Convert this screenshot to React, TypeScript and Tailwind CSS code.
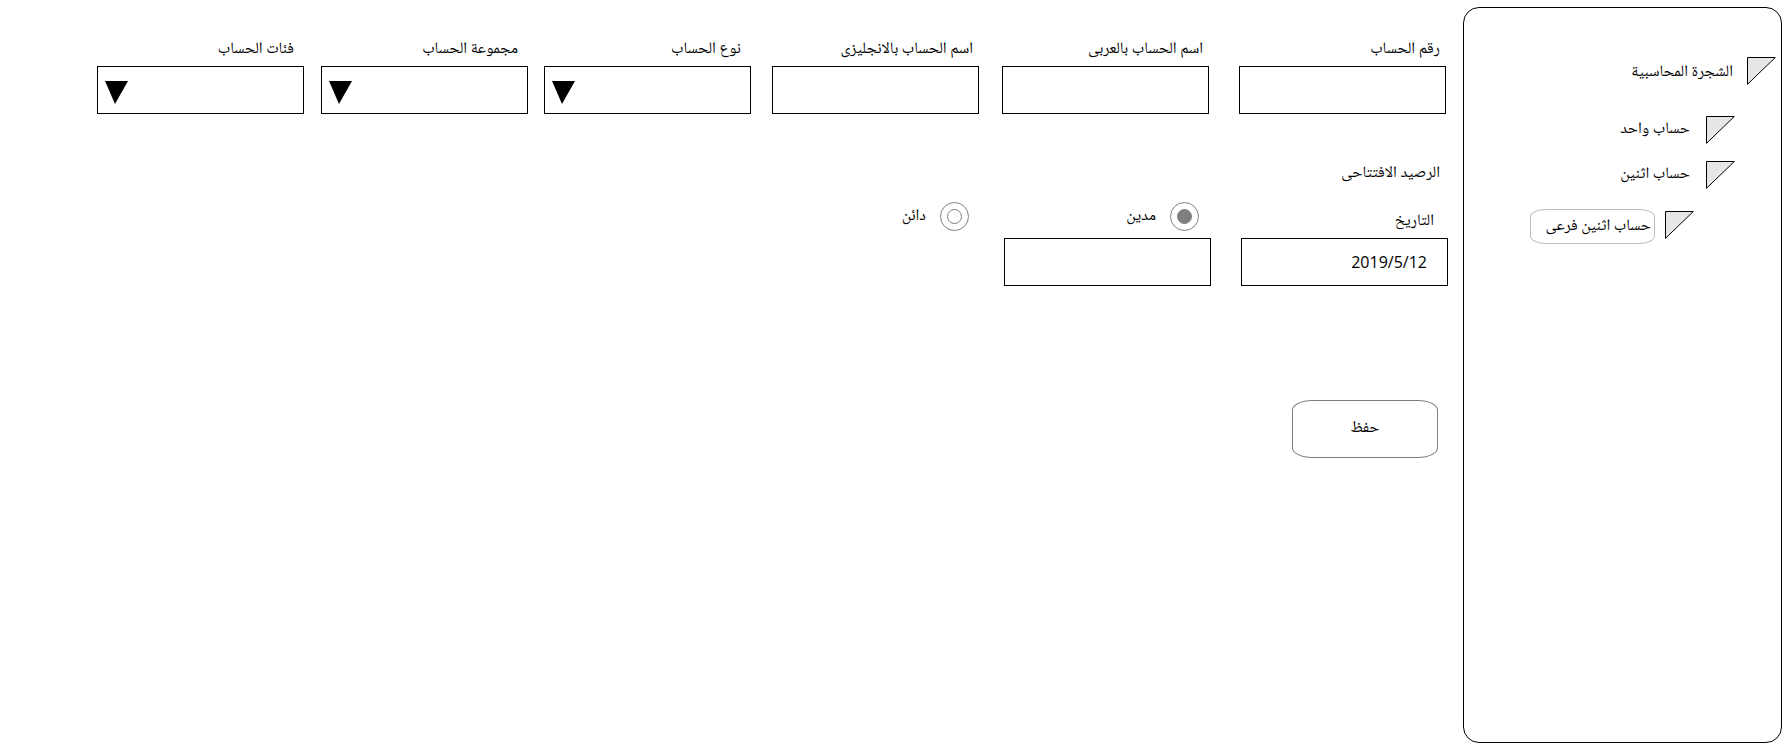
import { useState } from 'react';

const boxClass =
  'h-12 w-full border border-black bg-white px-5 font-[Open_Sans,Noto_Sans,sans-serif] text-base text-black outline-none focus:ring-1 focus:ring-gray-400';

const columns =
  'grid grid-cols-[207fr_30fr_207fr_23fr_207fr_21fr_207fr_16fr_207fr_17fr_207fr]';

function TextField({ id, label, place }: { id: string; label: string; place: string }) {
  return (
    <div className={`${place} flex min-w-0 flex-col gap-1`}>
      <label htmlFor={id} className="ps-1.5 leading-6">
        {label}
      </label>
      <input id={id} type="text" className={boxClass} />
    </div>
  );
}

function SelectField({ id, label, place }: { id: string; label: string; place: string }) {
  return (
    <div className={`${place} flex min-w-0 flex-col gap-1`}>
      <label htmlFor={id} className="ps-2.5 leading-6">
        {label}
      </label>
      <div className="relative">
        <select id={id} className={`${boxClass} appearance-none rounded-none`} defaultValue="">
          <option value="" />
        </select>
        <svg
          viewBox="0 0 23 23"
          className="pointer-events-none absolute left-2 top-[15px] size-[23px]"
          aria-hidden="true"
        >
          <path d="M0 0H23L10 23Z" fill="black" />
        </svg>
      </div>
    </div>
  );
}

function Corner() {
  return (
    <svg viewBox="0 0 29 28" className="h-7 w-[29px] shrink-0" aria-hidden="true">
      <path d="M0.5 0.5H28.3L0.5 27.3Z" fill="#e6e6e6" stroke="black" strokeLinejoin="round" />
    </svg>
  );
}

function SideRadio({
  id,
  label,
  checked,
  onSelect,
}: {
  id: string;
  label: string;
  checked: boolean;
  onSelect: () => void;
}) {
  return (
    <div className="flex items-center gap-3.5">
      <input
        id={id}
        type="radio"
        name="side"
        checked={checked}
        onChange={onSelect}
        className="grid size-[29px] shrink-0 appearance-none place-content-center rounded-full border border-[#7f7f7f] before:size-[15px] before:rounded-full before:border before:border-[#7f7f7f] before:content-[''] checked:before:bg-[#7f7f7f]"
      />
      <label htmlFor={id} className="leading-6">
        {label}
      </label>
    </div>
  );
}

export default function App() {
  const [side, setSide] = useState('debit');

  return (
    <div
      dir="rtl"
      className="flex min-h-screen gap-[15px] bg-white pb-2 ps-[10px] pt-[7px] font-[Noto_Naskh_Arabic,Noto_Sans,serif] text-base text-black"
    >
      <nav className="w-[319px] shrink-0 rounded-2xl border border-black ps-[5px] pt-[49px]">
        <ul>
          <li>
            <button type="button" className="flex items-center gap-3.5 leading-6">
              <Corner />
              <span className="pt-1">الشجرة المحاسبية</span>
            </button>
            <ul className="mt-[31px] ps-[41px]">
              <li>
                <button type="button" className="flex items-center gap-4 leading-6">
                  <Corner />
                  حساب واحد
                </button>
              </li>
              <li className="mt-[17px]">
                <button type="button" className="flex items-center gap-4 leading-6">
                  <Corner />
                  حساب اثنين
                </button>
                <ul className="mt-[22px] ps-[41px]">
                  <li>
                    <button type="button" className="flex items-start gap-2.5 leading-6">
                      <Corner />
                      <span className="-mt-0.5 flex h-[35px] w-[125px] items-center rounded-[16px_/_8px] border border-[#bfbfbf] ps-[3px]">
                        حساب اثنين فرعى
                      </span>
                    </button>
                  </li>
                </ul>
              </li>
            </ul>
          </li>
        </ul>
      </nav>

      <main className="min-w-0 flex-1 pt-[31px]">
        <form onSubmit={(e) => e.preventDefault()}>
          <div className={`${columns} pe-[97px] ps-0.5`}>
            <TextField id="number" label="رقم الحساب" place="col-start-1" />
            <TextField id="name-ar" label="اسم الحساب بالعربى" place="col-start-3" />
            <TextField id="name-en" label="اسم الحساب بالانجليزى" place="col-start-5" />
            <SelectField id="type" label="نوع الحساب" place="col-start-7" />
            <SelectField id="group" label="مجموعة الحساب" place="col-start-9" />
            <SelectField id="category" label="فئات الحساب" place="col-start-11" />
          </div>

          <h2 className="mt-12 ps-2 leading-6">الرصيد الافتتاحى</h2>

          <div className={`${columns} mt-4 items-start pe-[99px]`}>
            <div className="col-start-1 flex min-w-0 flex-col gap-1">
              <label htmlFor="date" className="ps-3.5 pt-2 leading-6">
                التاريخ
              </label>
              <input id="date" type="text" dir="ltr" defaultValue="2019/5/12" className={`${boxClass} text-right`} />
            </div>
            <div className="col-start-3 flex min-w-0 flex-col gap-[7px]">
              <div className="ps-3">
                <SideRadio id="debit" label="مدين" checked={side === 'debit'} onSelect={() => setSide('debit')} />
              </div>
              <input type="text" aria-label="الرصيد الافتتاحى" className={boxClass} />
            </div>
            <div className="col-start-5 ps-3">
              <SideRadio id="credit" label="دائن" checked={side === 'credit'} onSelect={() => setSide('credit')} />
            </div>
          </div>

          <button
            type="submit"
            className="ms-2.5 mt-[114px] h-[58px] w-[146px] rounded-[20px_/_10px] border border-[#7f7f7f]"
          >
            حفظ
          </button>
        </form>
      </main>
    </div>
  );
}
